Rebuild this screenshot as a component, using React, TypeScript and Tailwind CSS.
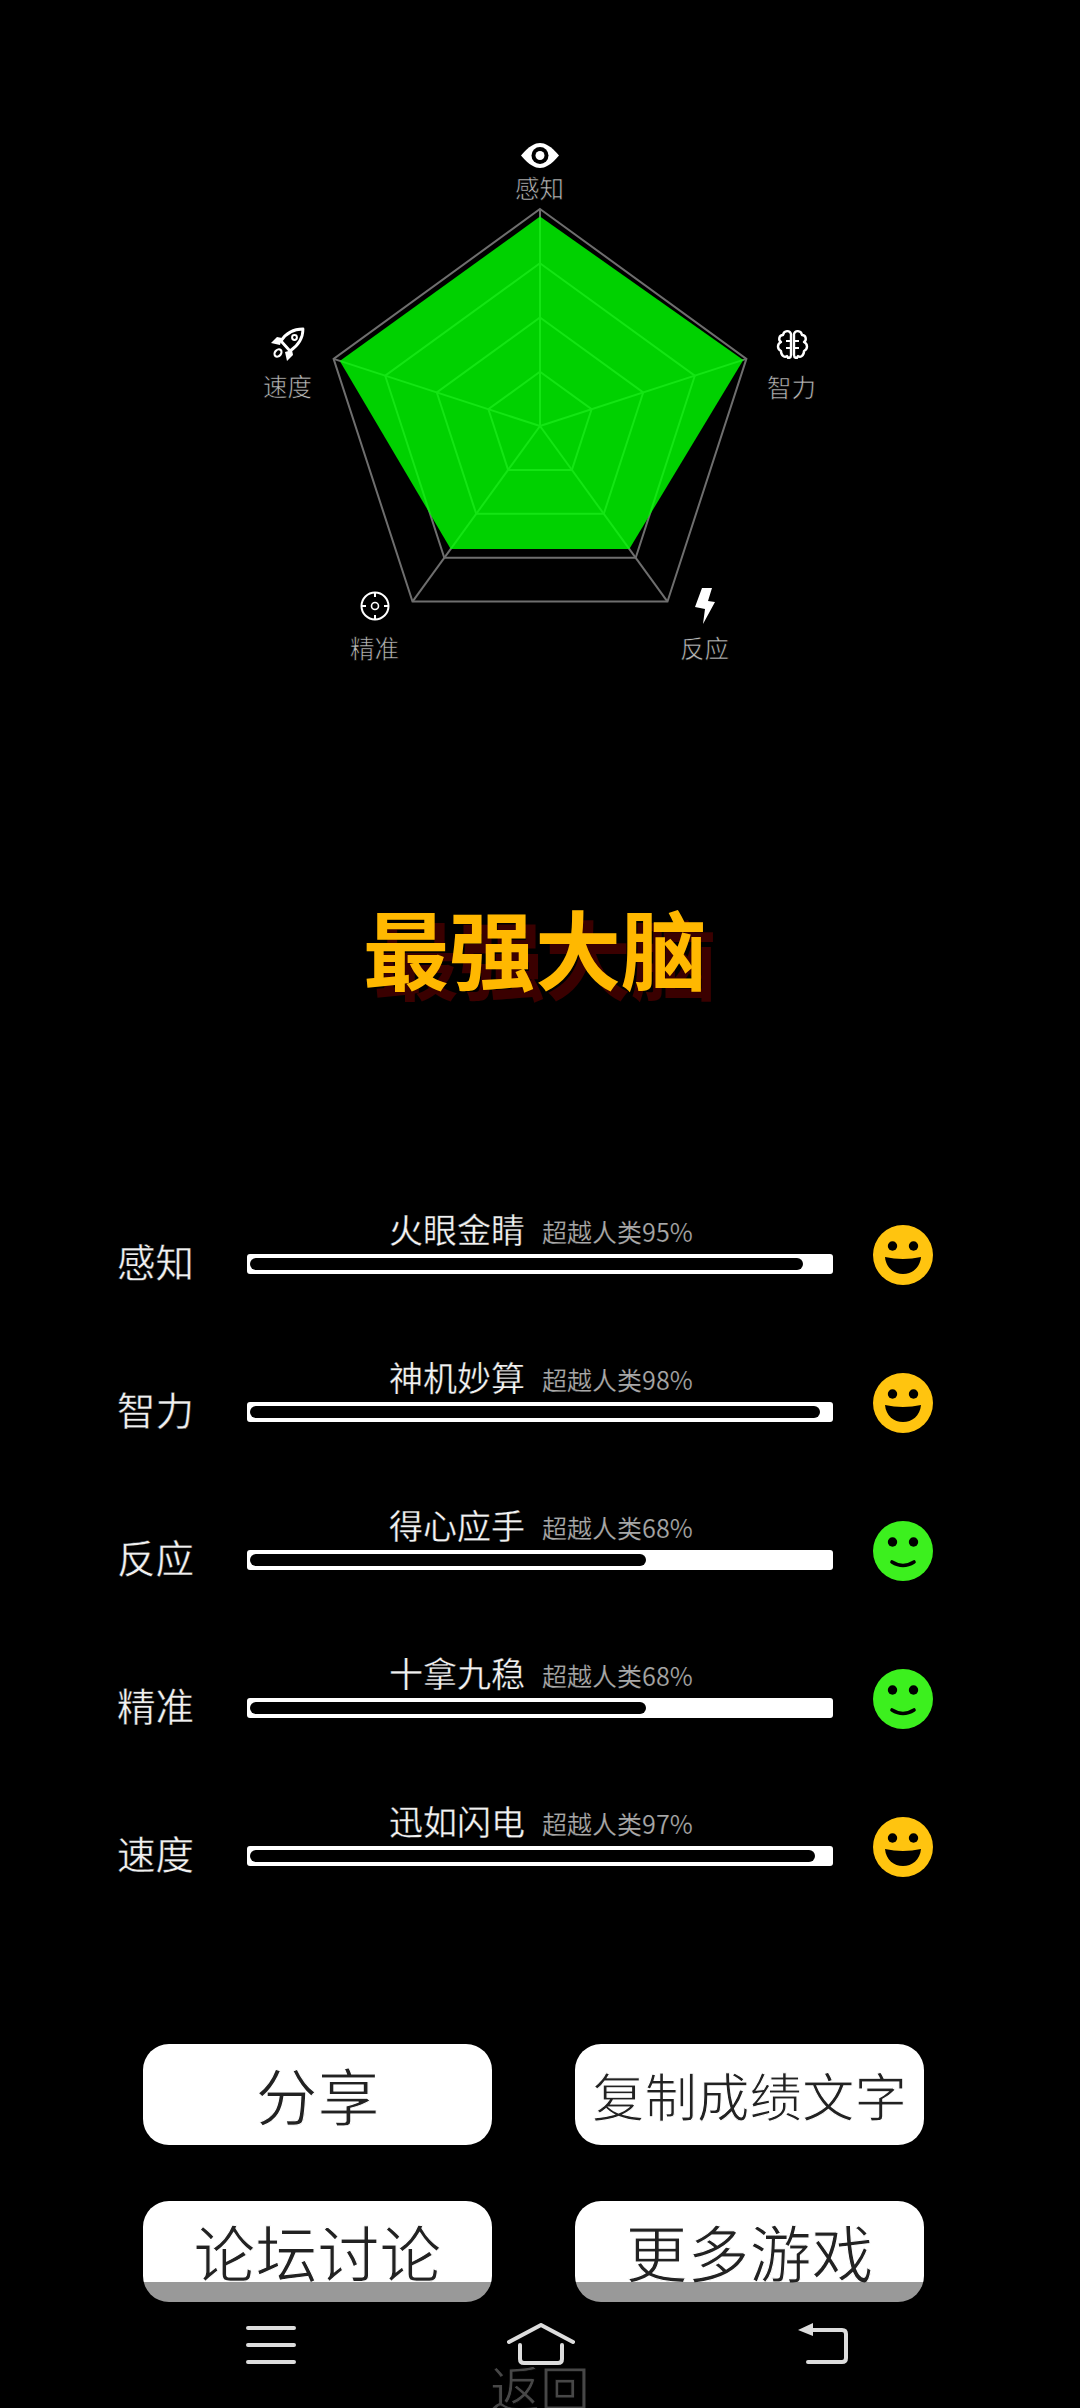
const stats = [
  { label: "感知", title: "火眼金睛", value: 95, radar: 0.965, good: true },
  { label: "智力", title: "神机妙算", value: 98, radar: 0.985, good: true },
  { label: "反应", title: "得心应手", value: 68, radar: 0.7, good: false },
  { label: "精准", title: "十拿九稳", value: 68, radar: 0.7, good: false },
  { label: "速度", title: "迅如闪电", value: 97, radar: 0.97, good: true },
];

const CX = 540;
const CY = 426;
const R = 217;

// vertices clockwise from the top
function point(i: number, ratio: number) {
  const a = (-90 + i * 72) * (Math.PI / 180);
  return `${(CX + Math.cos(a) * R * ratio).toFixed(1)},${(CY + Math.sin(a) * R * ratio).toFixed(1)}`;
}

function ring(ratio: number) {
  return [0, 1, 2, 3, 4].map((i) => point(i, ratio)).join(" ");
}

function Radar() {
  return (
    <svg width="1080" height="700" viewBox="0 0 1080 700" className="block">
      <g fill="none" stroke="#6e6e6e" strokeWidth="2">
        {[0.25, 0.5, 0.75, 1].map((r) => (
          <polygon key={r} points={ring(r)} />
        ))}
        {[0, 1, 2, 3, 4].map((i) => {
          const [x, y] = point(i, 1).split(",");
          return <line key={i} x1={CX} y1={CY} x2={x} y2={y} />;
        })}
      </g>
      <polygon points={stats.map((s, i) => point(i, s.radar)).join(" ")} fill="#00ff00" fillOpacity="0.82" />

      {/* eye */}
      <g transform="translate(521 143)">
        <path d="M0 12.5C8 3 14 0 19 0s11 3 19 12.5C30 22 24 25 19 25S8 22 0 12.5Z" fill="#fff" />
        <circle cx="19" cy="12.5" r="8.5" fill="#000" />
        <circle cx="19" cy="12.5" r="4.5" fill="#fff" />
      </g>

      {/* brain */}
      <g transform="translate(777 330)" fill="none" stroke="#fff" strokeWidth="2.4" strokeLinejoin="round">
        <path d="M14 4C13 0 7 0 6 5C2 5 1 10 4 12C0 14 0 19 4 21C4 26 8 28 10 26C11 29 14 28 14 25Z" />
        <path d="M17 4C18 0 24 0 25 5C29 5 30 10 27 12C31 14 31 19 27 21C27 26 23 28 21 26C20 29 17 28 17 25Z" />
        <path d="M14 11H9M14 18H9M17 11H22M17 18H22" strokeWidth="1.8" />
      </g>

      {/* rocket */}
      <g transform="translate(271 328)">
        <path d="M32 1C23 1 15 5 10 13L19 23C28 17 32 10 32 1Z" fill="#000" stroke="#fff" strokeWidth="2.8" strokeLinejoin="round" />
        <path d="M11 10L6 9L0 15L9 17Z" fill="#fff" />
        <path d="M21 22L22 27L16 33L14 24Z" fill="#fff" />
        <circle cx="23.5" cy="9.5" r="2.4" fill="none" stroke="#fff" strokeWidth="2" />
        <ellipse cx="7" cy="25" rx="3" ry="4" transform="rotate(40 7 25)" fill="none" stroke="#fff" strokeWidth="2.2" />
      </g>

      {/* target */}
      <g transform="translate(375 606)" fill="none" stroke="#fff">
        <circle r="13.5" strokeWidth="2" />
        <circle r="3.5" strokeWidth="1.6" />
        <path d="M0 -14V-9M0 14V9M-14 0H-9M14 0H9" strokeWidth="2" />
      </g>

      {/* bolt */}
      <polygon transform="translate(695 588)" points="7,0 17,0 13,13 20,14 8,36 10,21 0,19" fill="#fff" />
    </svg>
  );
}

function Face({ good }: { good: boolean }) {
  return (
    <svg width="60" height="60" viewBox="0 0 60 60" className="shrink-0">
      <circle cx="30" cy="30" r="30" fill={good ? "#ffc40f" : "#3cf01e"} />
      <circle cx="19.5" cy="21" r="4.7" fill="#000" />
      <circle cx="40.5" cy="21" r="4.7" fill="#000" />
      {good ? (
        <path d="M12 32Q30 36 48 32C47 43 39 49 30 49S13 43 12 32Z" fill="#000" />
      ) : (
        <path d="M19 41Q30 48 41 41" fill="none" stroke="#000" strokeWidth="3.6" strokeLinecap="round" />
      )}
    </svg>
  );
}

function StatRow({ label, title, value, good }: (typeof stats)[number]) {
  return (
    <div className="flex items-end pl-[117px]">
      <div className="mb-[6px] w-[130px] text-[38.5px] leading-[38px] text-[#f0f0f0] [-webkit-text-stroke:0.4px_#000]">{label}</div>
      <div className="mb-[11px] w-[586px]">
        <div className="flex h-[40px] items-start pl-[142px]">
          <span className="mt-[-5px] text-[34px] leading-[40px] text-[#f2f2f2] [-webkit-text-stroke:0.3px_#000]">{title}</span>
          <span className="ml-[17px] mt-[-1px] text-[25px] leading-[36px] text-[#a8a8a8] [-webkit-text-stroke:0.2px_#000]">超越人类{value}%</span>
        </div>
        <div className="h-[20px] rounded-[3px] bg-white pl-[3px] pt-[4px]">
          <div className="h-[12px] rounded-[6px] bg-black" style={{ width: `${value * 5.82}px` }} />
        </div>
      </div>
      <div className="ml-[40px]">
        <Face good={good} />
      </div>
    </div>
  );
}

function ActionButton({ text, small }: { text: string; small?: boolean }) {
  return (
    <button
      className={`flex h-[101px] w-[349px] items-center justify-center rounded-[26px] bg-white text-[#222] [-webkit-text-stroke:1.1px_#fff] ${
        small ? "text-[52.5px]" : "text-[62px]"
      }`}
    >
      {text}
    </button>
  );
}

export default function App() {
  return (
    <div className="relative h-[2408px] w-[1080px] overflow-hidden bg-black font-['Noto_Sans_CJK_SC',sans-serif]">
      {/* radar with its labels */}
      <div className="relative h-[897px]">
        <Radar />
        <span className="absolute left-[515px] top-[170px] text-[24.5px] leading-[36px] text-[#bbb] [-webkit-text-stroke:0.6px_#000]">感知</span>
        <span className="absolute left-[767px] top-[369px] text-[24.5px] leading-[36px] text-[#bbb] [-webkit-text-stroke:0.6px_#000]">智力</span>
        <span className="absolute left-[680px] top-[630px] text-[24.5px] leading-[36px] text-[#bbb] [-webkit-text-stroke:0.6px_#000]">反应</span>
        <span className="absolute left-[350px] top-[630px] text-[24.5px] leading-[36px] text-[#bbb] [-webkit-text-stroke:0.6px_#000]">精准</span>
        <span className="absolute left-[263px] top-[368px] text-[24.5px] leading-[36px] text-[#bbb] [-webkit-text-stroke:0.6px_#000]">速度</span>
      </div>

      <h1 className="h-[100px] pr-[10px] text-center text-[86px] font-bold leading-[100px] text-[#ffb800] [text-shadow:10px_10px_0_#3a0000]">最强大脑</h1>

      <div className="mt-[217px] flex flex-col gap-[77px]">
        {stats.map((s) => (
          <StatRow key={s.label} {...s} />
        ))}
      </div>

      <div className="ml-[143px] mt-[167px] grid w-[782px] grid-cols-[349px_349px] gap-x-[83px] gap-y-[56px]">
        <ActionButton text="分享" />
        <ActionButton text="复制成绩文字" small />
        <ActionButton text="论坛讨论" />
        <ActionButton text="更多游戏" />
      </div>

      <div className="mt-[34px] text-center text-[50px] leading-[101px] text-[#777] [-webkit-text-stroke:0.9px_#000]">返回</div>

      {/* system navigation bar over the page */}
      <div className="absolute bottom-0 left-0 flex h-[126px] w-full items-start bg-black/40 pl-[246px] pt-[41px]">
        <svg width="50" height="42" viewBox="0 0 50 42" fill="none" stroke="#ddd" strokeWidth="4" strokeLinecap="round">
          <path d="M2 5H48M2 22H48M2 39H48" />
        </svg>
        <svg width="68" height="42" viewBox="0 0 68 42" fill="none" stroke="#ddd" strokeWidth="4" strokeLinecap="round" strokeLinejoin="round" className="ml-[211px]">
          <path d="M2 19L34 2L66 19" />
          <path d="M13 22V36Q13 40 17 40H51Q55 40 55 36V22" />
        </svg>
        <svg width="50" height="42" viewBox="0 0 50 42" fill="none" className="ml-[223px]">
          <path d="M0 7L15 0V13Z" fill="#ddd" />
          <path d="M14 7H44Q48 7 48 11V35Q48 39 44 39H10" stroke="#ddd" strokeWidth="4" strokeLinecap="round" />
        </svg>
      </div>
    </div>
  );
}
